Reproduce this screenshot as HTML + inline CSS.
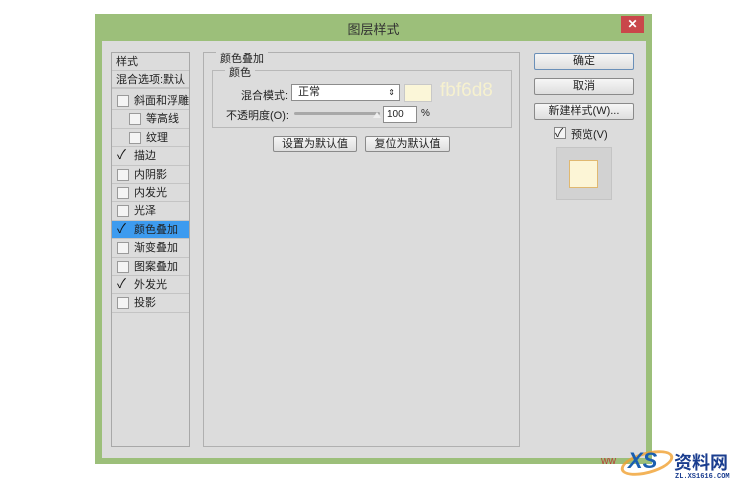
<!DOCTYPE html>
<html><head><meta charset="utf-8"><style>
*{margin:0;padding:0;box-sizing:border-box}
body{width:750px;height:489px;background:#fff;position:relative;overflow:hidden;font-family:"Liberation Sans","Noto Sans CJK SC",sans-serif;font-size:11px;color:#222}
.a{position:absolute}
.win{left:95px;top:14px;width:557px;height:450px;background:#9cbf7a}
.in{left:102px;top:41px;width:544px;height:417px;background:#dcdcdc}
.title{left:95px;top:19px;width:557px;text-align:center;font-size:13px;color:#333}
.close{left:621px;top:16px;width:23px;height:17px;background:#c9474a;color:#fff;text-align:center;font-size:12px;line-height:17px;font-weight:bold}
.lp{left:111px;top:52px;width:79px;height:395px;border:1px solid #a8a8a8;background:#dcdcdc}
.row{position:absolute;left:0;width:77px;height:18.4px;border-bottom:1px solid #c4c4c4;line-height:18px;font-size:11px}
.cb{position:absolute;top:3px;width:12px;height:12px;border:1px solid #9a9a9a;background:#f4f4f4}
.ck{position:absolute;top:-4px;left:0;font-size:13px;color:#111}
.sel{background:#3d9bef}
.box{left:203px;top:52px;width:317px;height:395px;border:1px solid #b0b0b0}
.btn{position:absolute;border:1px solid #8a8a8a;border-radius:2px;background:linear-gradient(#f6f6f6,#dedede);text-align:center;font-size:11px}
</style></head><body>
<div class="a win"></div>
<div class="a in"></div>
<div class="a title">图层样式</div>
<div class="a close">✕</div>
<div class="a lp">
 <div class="row" style="top:0;padding-left:4px">样式</div>
 <div class="row" style="top:18px;padding-left:4px;border-bottom:2px solid #c4c4c4">混合选项:默认</div>
 <div class="row" style="top:39px"><span class="cb" style="left:5px"></span><span style="position:absolute;left:22px">斜面和浮雕</span></div>
 <div class="row" style="top:57.4px"><span class="cb" style="left:17px"></span><span style="position:absolute;left:34px">等高线</span></div>
 <div class="row" style="top:75.8px"><span class="cb" style="left:17px"></span><span style="position:absolute;left:34px">纹理</span></div>
 <div class="row" style="top:94.2px"><span class="cb" style="left:5px;border:0;background:none"><span class="ck">✓</span></span><span style="position:absolute;left:22px">描边</span></div>
 <div class="row" style="top:112.6px"><span class="cb" style="left:5px"></span><span style="position:absolute;left:22px">内阴影</span></div>
 <div class="row" style="top:131px"><span class="cb" style="left:5px"></span><span style="position:absolute;left:22px">内发光</span></div>
 <div class="row" style="top:149.4px"><span class="cb" style="left:5px"></span><span style="position:absolute;left:22px">光泽</span></div>
 <div class="row sel" style="top:167.8px"><span class="cb" style="left:5px;border:0;background:none"><span class="ck">✓</span></span><span style="position:absolute;left:22px">颜色叠加</span></div>
 <div class="row" style="top:186.2px"><span class="cb" style="left:5px"></span><span style="position:absolute;left:22px">渐变叠加</span></div>
 <div class="row" style="top:204.6px"><span class="cb" style="left:5px"></span><span style="position:absolute;left:22px">图案叠加</span></div>
 <div class="row" style="top:223px"><span class="cb" style="left:5px;border:0;background:none"><span class="ck">✓</span></span><span style="position:absolute;left:22px">外发光</span></div>
 <div class="row" style="top:241.4px"><span class="cb" style="left:5px"></span><span style="position:absolute;left:22px">投影</span></div>
</div>
<div class="a box"></div>
<div class="a" style="left:216px;top:50px;padding:0 4px;background:#dcdcdc">颜色叠加</div>
<div class="a" style="left:212px;top:70px;width:300px;height:58px;border:1px solid #b8b8b8"></div>
<div class="a" style="left:225px;top:64px;padding:0 4px;background:#dcdcdc">颜色</div>
<div class="a" style="left:241px;top:87px">混合模式:</div>
<div class="a" style="left:291px;top:84px;width:109px;height:17px;border:1px solid #8c8c8c;background:#fff;padding-left:6px;line-height:15px">正常<span style="position:absolute;right:4px;font-size:8px">⇕</span></div>
<div class="a" style="left:404px;top:84px;width:28px;height:18px;background:#fbf6d8;border:1px solid #c8c8c8"></div>
<div class="a" style="left:440px;top:80px;font-size:19px;color:#f6f1cf">fbf6d8</div>
<div class="a" style="left:226px;top:107px">不透明度(O):</div>
<div class="a" style="left:294px;top:112px;width:86px;height:3px;background:#a8a8a8;border-radius:2px"></div>
<div class="a" style="left:373px;top:112px;width:0;height:0;border-left:4px solid transparent;border-right:4px solid transparent;border-bottom:6px solid #eee"></div>
<div class="a" style="left:383px;top:106px;width:34px;height:17px;border:1px solid #8c8c8c;background:#fff;padding-left:3px;line-height:15px;font-size:10px">100</div>
<div class="a" style="left:421px;top:108px;font-size:10px">%</div>
<div class="btn" style="left:273px;top:136px;width:84px;height:16px;line-height:14px">设置为默认值</div>
<div class="btn" style="left:365px;top:136px;width:85px;height:16px;line-height:14px">复位为默认值</div>
<div class="btn" style="left:534px;top:53px;width:100px;height:17px;line-height:15px;border-color:#6a8fb8">确定</div>
<div class="btn" style="left:534px;top:78px;width:100px;height:17px;line-height:15px">取消</div>
<div class="btn" style="left:534px;top:103px;width:100px;height:17px;line-height:15px">新建样式(W)...</div>
<div class="a" style="left:554px;top:127px;width:12px;height:12px;border:1px solid #888;background:#f4f4f4;font-size:12px;line-height:10px">✓</div>
<div class="a" style="left:571px;top:126px">预览(V)</div>
<div class="a" style="left:556px;top:147px;width:56px;height:53px;background:#d2d2d2;border:1px solid #c4c4c4"></div>
<div class="a" style="left:569px;top:160px;width:29px;height:28px;background:#fcf5d6;border:1px solid #e0b870"></div>
<div class="a" style="left:620px;top:452px;width:54px;height:22px;border:3px solid #f0a030;border-radius:50%;transform:rotate(-15deg);opacity:.8"></div>
<div class="a" style="left:628px;top:448px;font-size:22px;font-weight:bold;color:#1a5fb0;font-style:italic">XS</div>
<div class="a" style="left:674px;top:449px;font-size:18px;font-weight:bold;color:#1a3d8f">资料网</div>
<div class="a" style="left:675px;top:473px;font-size:7px;font-weight:bold;color:#1a3d8f;font-family:'Liberation Mono',monospace">ZL.XS1616.COM</div>
<div class="a" style="left:601px;top:457px;font-size:8px;color:#b33">WW</div>
</body></html>
